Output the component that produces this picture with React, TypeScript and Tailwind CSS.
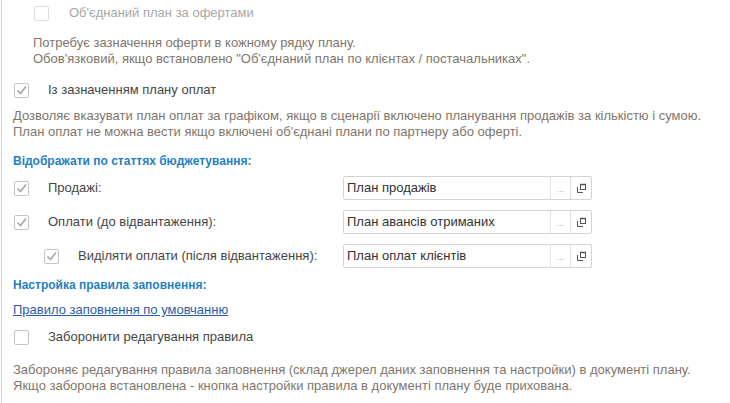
import React from "react";

const font = { fontFamily: '"Liberation Sans", Arial, sans-serif' };

const Check: React.FC<{ checked?: boolean; faint?: boolean }> = ({ checked, faint }) => (
  <div
    className={`w-[15px] h-[15px] shrink-0 rounded-[2px] border bg-white flex items-center justify-center ${
      faint ? "border-[#dcdcdc]" : "border-[#c4c4c4]"
    }`}
  >
    {checked && (
      <svg width="13" height="13" viewBox="0 0 13 13">
        <path d="M2.5 6.5 L5.5 9.5 L11 2.5" fill="none" stroke="#a8a8a8" strokeWidth="1.7" />
      </svg>
    )}
  </div>
);

const OpenIcon = () => (
  <svg width="11" height="11" viewBox="0 0 11 11">
    <rect x="4.5" y="1.5" width="5" height="5" fill="none" stroke="#555" strokeWidth="1" />
    <path d="M4 1.5 H10" stroke="#555" strokeWidth="1.5" />
    <path d="M1.5 4 V9.5 H7" fill="none" stroke="#555" strokeWidth="1" />
  </svg>
);

const Field: React.FC<{ value: string }> = ({ value }) => (
  <div className="w-[249px] h-[24px] flex border border-[#d4d4d4] rounded-[2px] bg-white">
    <div className="flex-1 flex items-center pl-[3px] text-[13px] text-[#333]">{value}</div>
    <div className="w-[20px] border-l border-[#e2e2e2] flex items-end justify-center pb-[5px] text-[9px] leading-none text-[#b0b0b0]">
      ...
    </div>
    <div className="w-[21px] border-l border-[#e2e2e2] flex items-center justify-center">
      <OpenIcon />
    </div>
  </div>
);

const Row: React.FC<{ label: string; value: string; indent?: boolean; mt: string }> = ({
  label,
  value,
  indent,
  mt,
}) => (
  <div className={`flex items-center h-[24px] ${mt}`}>
    <div className={`flex items-center w-[341px] ${indent ? "pl-[42px]" : "pl-[12px]"}`}>
      <Check checked />
      <span className="ml-[19px] text-[13px] text-[#454545]">{label}</span>
    </div>
    <Field value={value} />
  </div>
);

export default function App() {
  return (
    <div className="w-[730px] h-[403px] bg-white overflow-hidden pl-px" style={font}>
      <div className="h-full border-l border-[#d8d8d8]">
        <div className="flex items-center h-[26px] pl-[32px]">
          <Check faint />
          <span className="ml-[20px] text-[13px] text-[#a8a8a8]">Об'єднаний план за офертами</span>
        </div>
        <div className="mt-[9px] pl-[31px] text-[13px] leading-4 text-[#7f766c]">
          <div>Потребує зазначення оферти в кожному рядку плану.</div>
          <div>Обов'язковий, якщо встановлено "Об'єднаний план по клієнтах / постачальниках".</div>
        </div>

        <div className="flex items-center h-[26px] mt-[10px] pl-[12px]">
          <Check checked />
          <span className="ml-[19px] text-[13px] text-[#454545]">Із зазначенням плану оплат</span>
        </div>
        <div className="mt-[5px] pl-[11px] text-[13px] leading-4 text-[#7f766c]">
          <div>
            Дозволяє вказувати план оплат за графіком, якщо в сценарії включено планування продажів за кількістю і сумою.
          </div>
          <div>План оплат не можна вести якщо включені об'єднані плани по партнеру або оферті.</div>
        </div>

        <div className="mt-[13px] pl-[11px] text-[12px] leading-4 font-bold text-[#1f7fc4]">
          Відображати по статтях бюджетування:
        </div>

        <Row mt="mt-[7px]" label="Продажі:" value="План продажів" />
        <Row mt="mt-[10px]" label="Оплати (до відвантаження):" value="План авансів отриманих" />
        <Row mt="mt-[10px]" indent label="Виділяти оплати (після відвантаження):" value="План оплат клієнтів" />

        <div className="mt-[9px] pl-[11px] text-[12px] leading-4 font-bold text-[#1f7fc4]">
          Настройка правила заповнення:
        </div>
        <div className="mt-[9px] pl-[11px] text-[13px] leading-4">
          <a href="#" className="underline text-[#2b5ca8]">
            Правило заповнення по умовчанню
          </a>
        </div>

        <div className="flex items-center h-[26px] mt-[6px] pl-[12px]">
          <Check />
          <span className="ml-[19px] text-[13px] text-[#454545]">Заборонити редагування правила</span>
        </div>
        <div className="mt-[12px] pl-[11px] text-[13px] leading-4 text-[#7f766c]">
          <div>
            Забороняє редагування правила заповнення (склад джерел даних заповнення та настройки) в документі плану.
          </div>
          <div>Якщо заборона встановлена - кнопка настройки правила в документі плану буде прихована.</div>
        </div>
      </div>
    </div>
  );
}
